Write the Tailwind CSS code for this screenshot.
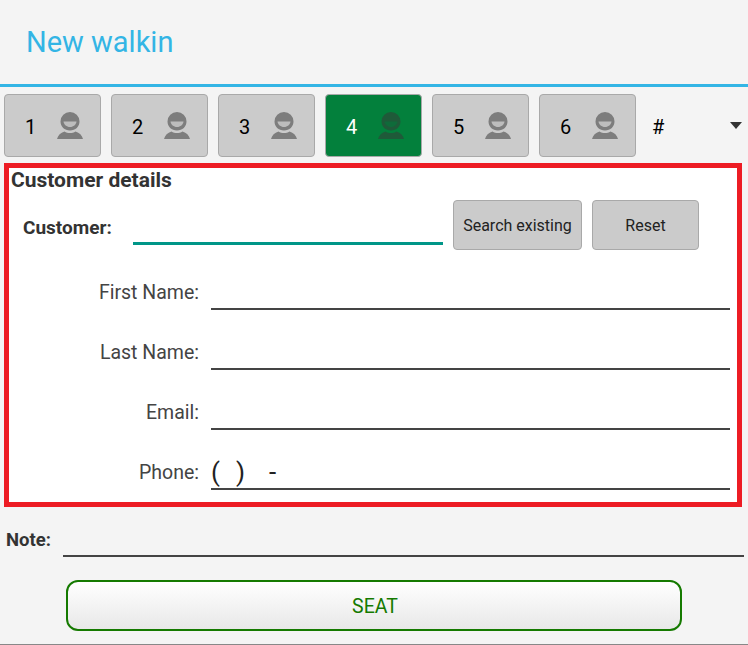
<!DOCTYPE html>
<html lang="en">
  <head>
    <meta charset="UTF-8" />
    <title>New walkin</title>
    <script src="https://cdn.jsdelivr.net/npm/@tailwindcss/browser@4"></script>
  </head>
  <body class="w-[748px] h-[645px] overflow-hidden bg-[#f4f4f4] font-['Roboto',sans-serif] text-[#333]">
    <header class="h-[87px] border-b-[3px] border-[#33b5e5] pl-[26px] pt-[22px]">
      <h1 class="text-[29px] leading-[40px] text-[#33b5e5]">New walkin</h1>
    </header>

    <!-- party size -->
    <div class="flex gap-[10px] pl-1 pt-[7px] h-[76px]">
      <button class="shrink-0 w-[97px] h-[63px] flex items-center rounded-[4px] border border-[#a9a9a9] bg-[#cbcbcb] text-[20px] text-black pl-[20px]">
        <span class="w-[22px] text-left pt-[2px]">1</span>
        <svg class="ml-[10px] mt-[-1px]" width="26" height="27" viewBox="0 0 26 27"><path fill="#7d7d7d" d="M13 0a9.500 9.500 0 0 1 9.500 9.500c0 5-4 9-9.500 9s-9.500-4-9.500-9A9.500 9.500 0 0 1 13 0z"/><path fill="#bdbdbd" d="M6.500 9.500h13c-.5 3.200-3 5.500-6.500 5.500s-6-2.300-6.500-5.500z"/><path fill="#7d7d7d" d="M0 27c1-3.800 3.500-6.300 7.500-7.500 1.500 1 3.500 1.500 5.500 1.500s4-.5 5.500-1.500c4 1.200 6.500 3.700 7.500 7.500z"/></svg>
      </button>
      <button class="shrink-0 w-[97px] h-[63px] flex items-center rounded-[4px] border border-[#a9a9a9] bg-[#cbcbcb] text-[20px] text-black pl-[20px]">
        <span class="w-[22px] text-left pt-[2px]">2</span>
        <svg class="ml-[10px] mt-[-1px]" width="26" height="27" viewBox="0 0 26 27"><path fill="#7d7d7d" d="M13 0a9.500 9.500 0 0 1 9.500 9.500c0 5-4 9-9.500 9s-9.500-4-9.500-9A9.500 9.500 0 0 1 13 0z"/><path fill="#bdbdbd" d="M6.500 9.500h13c-.5 3.200-3 5.500-6.500 5.500s-6-2.300-6.500-5.500z"/><path fill="#7d7d7d" d="M0 27c1-3.800 3.500-6.300 7.500-7.500 1.500 1 3.500 1.500 5.500 1.500s4-.5 5.500-1.500c4 1.200 6.500 3.700 7.500 7.500z"/></svg>
      </button>
      <button class="shrink-0 w-[97px] h-[63px] flex items-center rounded-[4px] border border-[#a9a9a9] bg-[#cbcbcb] text-[20px] text-black pl-[20px]">
        <span class="w-[22px] text-left pt-[2px]">3</span>
        <svg class="ml-[10px] mt-[-1px]" width="26" height="27" viewBox="0 0 26 27"><path fill="#7d7d7d" d="M13 0a9.500 9.500 0 0 1 9.500 9.500c0 5-4 9-9.500 9s-9.500-4-9.500-9A9.500 9.500 0 0 1 13 0z"/><path fill="#bdbdbd" d="M6.500 9.500h13c-.5 3.200-3 5.500-6.500 5.500s-6-2.300-6.500-5.500z"/><path fill="#7d7d7d" d="M0 27c1-3.800 3.500-6.300 7.500-7.500 1.500 1 3.500 1.500 5.500 1.500s4-.5 5.500-1.500c4 1.200 6.500 3.700 7.500 7.500z"/></svg>
      </button>
      <button class="shrink-0 w-[97px] h-[63px] flex items-center rounded-[4px] border border-[#a9a9a9] bg-[#03803c] text-[20px] text-white pl-[20px]">
        <span class="w-[22px] text-left pt-[2px]">4</span>
        <svg class="ml-[10px] mt-[-1px]" width="26" height="27" viewBox="0 0 26 27"><path fill="#1f5a39" d="M13 0a9.500 9.500 0 0 1 9.500 9.500c0 5-4 9-9.500 9s-9.500-4-9.500-9A9.500 9.500 0 0 1 13 0z"/><path fill="#0f6b3a" d="M6.500 9.500h13c-.5 3.200-3 5.500-6.500 5.500s-6-2.300-6.500-5.500z"/><path fill="#1f5a39" d="M0 27c1-3.800 3.500-6.300 7.500-7.500 1.500 1 3.500 1.500 5.500 1.500s4-.5 5.500-1.500c4 1.200 6.500 3.700 7.500 7.500z"/></svg>
      </button>
      <button class="shrink-0 w-[97px] h-[63px] flex items-center rounded-[4px] border border-[#a9a9a9] bg-[#cbcbcb] text-[20px] text-black pl-[20px]">
        <span class="w-[22px] text-left pt-[2px]">5</span>
        <svg class="ml-[10px] mt-[-1px]" width="26" height="27" viewBox="0 0 26 27"><path fill="#7d7d7d" d="M13 0a9.500 9.500 0 0 1 9.500 9.500c0 5-4 9-9.500 9s-9.500-4-9.500-9A9.500 9.500 0 0 1 13 0z"/><path fill="#bdbdbd" d="M6.500 9.500h13c-.5 3.200-3 5.500-6.500 5.500s-6-2.300-6.500-5.500z"/><path fill="#7d7d7d" d="M0 27c1-3.800 3.500-6.300 7.500-7.500 1.500 1 3.500 1.500 5.500 1.500s4-.5 5.500-1.500c4 1.200 6.500 3.700 7.500 7.500z"/></svg>
      </button>
      <button class="shrink-0 w-[97px] h-[63px] flex items-center rounded-[4px] border border-[#a9a9a9] bg-[#cbcbcb] text-[20px] text-black pl-[20px]">
        <span class="w-[22px] text-left pt-[2px]">6</span>
        <svg class="ml-[10px] mt-[-1px]" width="26" height="27" viewBox="0 0 26 27"><path fill="#7d7d7d" d="M13 0a9.500 9.500 0 0 1 9.500 9.500c0 5-4 9-9.500 9s-9.500-4-9.500-9A9.500 9.500 0 0 1 13 0z"/><path fill="#bdbdbd" d="M6.500 9.500h13c-.5 3.200-3 5.500-6.500 5.500s-6-2.300-6.500-5.500z"/><path fill="#7d7d7d" d="M0 27c1-3.800 3.500-6.300 7.500-7.500 1.500 1 3.500 1.500 5.500 1.500s4-.5 5.500-1.500c4 1.200 6.500 3.700 7.500 7.500z"/></svg>
      </button>
      <div class="shrink-0 w-[90px] h-[63px] ml-[6px] flex items-center justify-between text-[20px] text-black">
        <span class="pt-[2px]">#</span>
        <svg width="12" height="7" viewBox="0 0 12 7"><path fill="#333" d="M0 0h12L6 7z"/></svg>
      </div>
    </div>

    <!-- customer details -->
    <section class="mx-1 w-[738px] h-[344px] border-[5px] border-[#ed1c24] bg-white">
      <h2 class="pl-[2px] text-[21px] leading-[24px] font-bold text-[#333]">Customer details</h2>
      <div class="flex h-[50px] mt-[8px]">
        <span class="ml-[14px] w-[110px] pt-[16px] text-[19px] leading-[24px] font-bold">Customer:</span>
        <div class="w-[310px] h-[45px] border-b-[3px] border-[#009688]"></div>
        <button class="ml-[10px] w-[129px] h-[50px] pt-[2px] rounded-[4px] border border-[#a9a9a9] bg-[#cbcbcb] text-[16px] text-[#222]">Search existing</button>
        <button class="ml-[10px] w-[107px] h-[50px] pt-[2px] rounded-[4px] border border-[#a9a9a9] bg-[#cbcbcb] text-[16px] text-[#222]">Reset</button>
      </div>
      <div class="mt-[10px] flex flex-col gap-[10px]">
        <div class="flex h-[50px] items-end">
          <label class="w-[190px] pb-[5px] text-right text-[19.5px] leading-[24px] text-[#444]">First Name:</label>
          <div class="ml-[12px] w-[519px] h-[50px] border-b-2 border-[#444]"></div>
        </div>
        <div class="flex h-[50px] items-end">
          <label class="w-[190px] pb-[5px] text-right text-[19.5px] leading-[24px] text-[#444]">Last Name:</label>
          <div class="ml-[12px] w-[519px] h-[50px] border-b-2 border-[#444]"></div>
        </div>
        <div class="flex h-[50px] items-end">
          <label class="w-[190px] pb-[5px] text-right text-[19.5px] leading-[24px] text-[#444]">Email:</label>
          <div class="ml-[12px] w-[519px] h-[50px] border-b-2 border-[#444]"></div>
        </div>
        <div class="flex h-[50px] items-end">
          <label class="w-[190px] pb-[5px] text-right text-[19.5px] leading-[24px] text-[#444]">Phone:</label>
          <div class="ml-[12px] w-[519px] h-[50px] border-b-2 border-[#444] flex items-end pb-[1px] text-[26px] leading-[30px] text-[#222]"><span>(</span><span class="ml-[16px]">)</span><span class="ml-[24px]">-</span></div>
        </div>
      </div>
    </section>

    <!-- note and submit -->
    <div class="flex h-[50px] items-end">
      <span class="ml-[6px] w-[57px] pb-[5px] text-[18.5px] leading-[24px] font-bold">Note:</span>
      <div class="w-[681px] h-[40px] border-b-2 border-[#444]"></div>
    </div>
    <div class="pl-[66px] pt-[23px]">
      <button class="w-[616px] h-[51px] pt-[2px] pl-[2px] rounded-[12px] border-2 border-[#157a00] bg-linear-to-b from-white to-[#e8e8e8] text-[19.5px] text-[#157a00]">SEAT</button>
    </div>
    <div class="mt-[13px] h-px bg-[#888]"></div>
  </body>
</html>
